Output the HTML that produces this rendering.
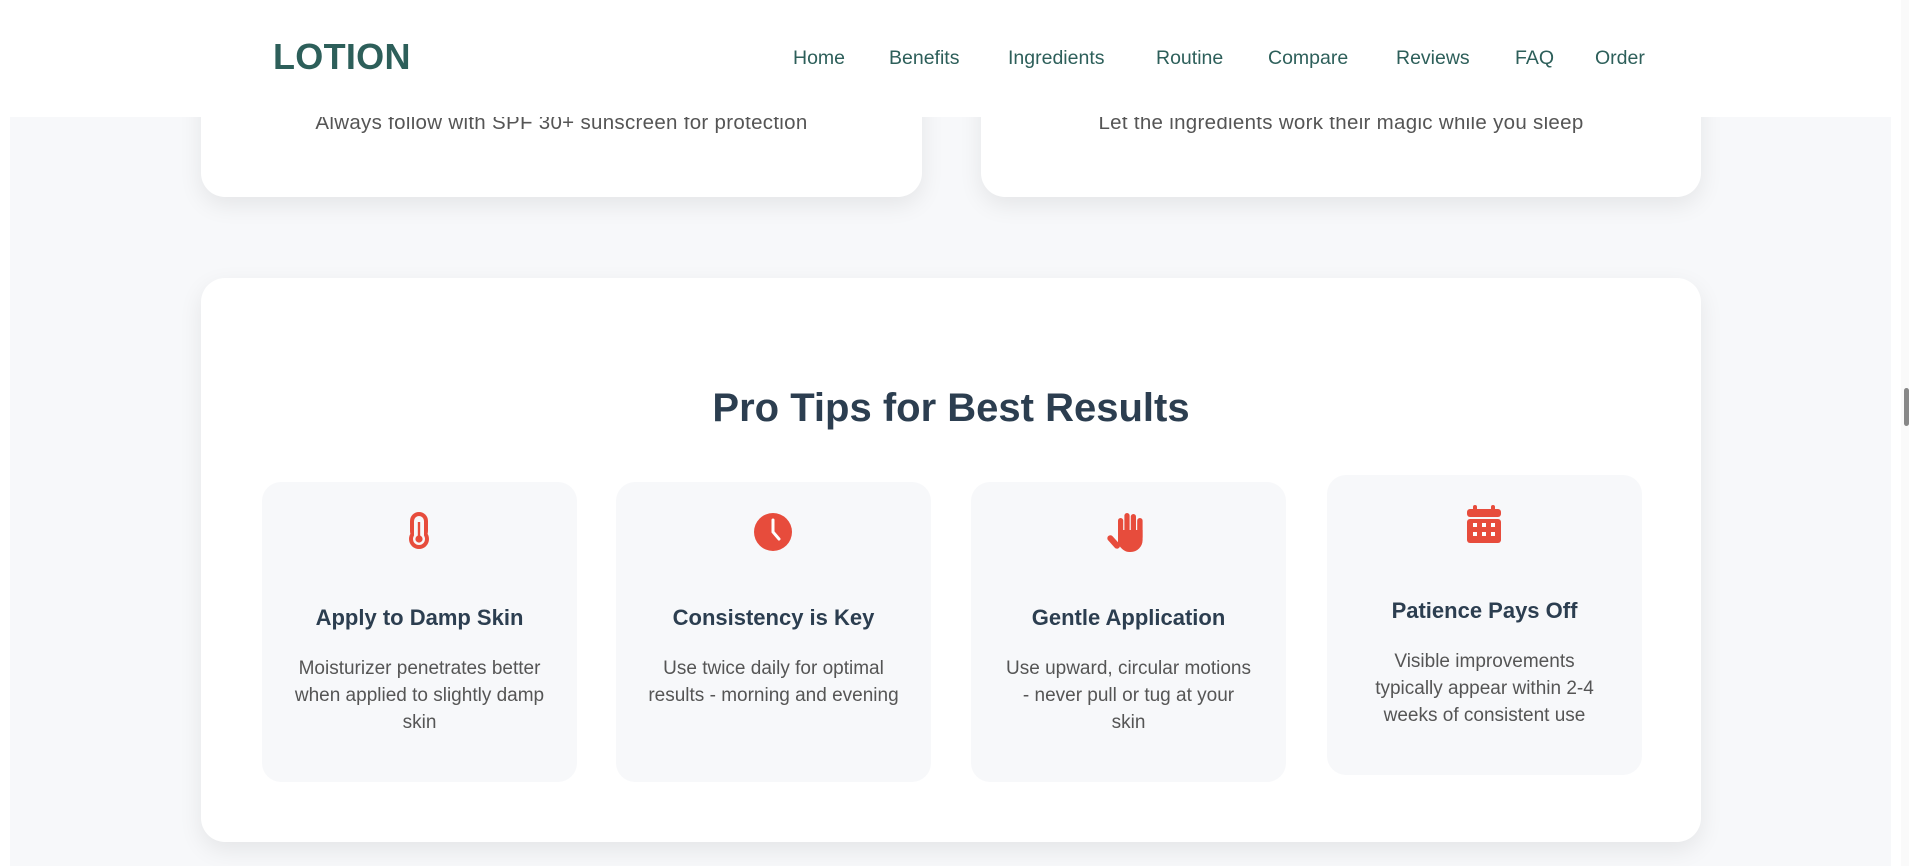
<!DOCTYPE html>
<html><head><meta charset="utf-8">
<style>
*{margin:0;padding:0;box-sizing:border-box}
html,body{width:1909px;height:866px;overflow:hidden;background:#fff;font-family:"Liberation Sans",Arial,sans-serif}
.bg{position:absolute;left:10px;top:0;width:1881px;height:866px;background:#f7f8fa}
.header{position:absolute;left:0;top:0;width:1893px;height:117px;background:#fff;z-index:5}
.logo{position:absolute;left:273px;top:36px;font-size:36px;font-weight:bold;color:#2d5f5a;letter-spacing:0.3px}
.nav{position:absolute;top:47px;font-size:19.5px;color:#2d5f5a}
.card{position:absolute;background:#fff;border-radius:24px;box-shadow:0 8px 24px rgba(0,0,0,0.08)}
.ctext{position:absolute;width:100%;text-align:center;top:111px;font-size:20.5px;letter-spacing:0.3px;color:#555}
h2{position:absolute;left:0;width:100%;text-align:center;top:108px;font-size:40px;font-weight:bold;color:#2c3e50}
.tip{position:absolute;width:315px;height:300px;background:#f7f8fa;border-radius:19px;text-align:center}
.tip svg{position:absolute}
.tip h3{position:absolute;left:0;width:100%;top:123px;font-size:22px;font-weight:bold;color:#2c3e50}
.tip p{position:absolute;left:0;width:315px;top:173px;font-size:19px;line-height:27px;color:#555}
.sb{position:absolute;left:1901px;top:0;width:8px;height:866px;background:#fafafa}
.thumb{position:absolute;left:1904px;top:388px;width:5px;height:38px;background:#888;border-radius:3px}
</style></head><body>
<div class="bg"></div>
<div class="card" style="left:201px;top:0;width:721px;height:197px;border-radius:0 0 24px 24px"><div class="ctext">Always follow with SPF 30+ sunscreen for protection</div></div>
<div class="card" style="left:981px;top:0;width:720px;height:197px;border-radius:0 0 24px 24px"><div class="ctext">Let the ingredients work their magic while you sleep</div></div>
<div class="header">
<div class="logo">LOTION</div>
<span class="nav" style="left:793px">Home</span>
<span class="nav" style="left:889px">Benefits</span>
<span class="nav" style="left:1008px">Ingredients</span>
<span class="nav" style="left:1156px">Routine</span>
<span class="nav" style="left:1268px">Compare</span>
<span class="nav" style="left:1396px">Reviews</span>
<span class="nav" style="left:1515px">FAQ</span>
<span class="nav" style="left:1595px">Order</span>
</div>
<div class="card" style="left:201px;top:278px;width:1500px;height:564px">
<h2>Pro Tips for Best Results</h2>
<div class="tip" style="left:61px;top:204px">
<svg style="left:146px;top:30px" width="22" height="37" viewBox="0 0 22 37"><rect x="2" y="0" width="18" height="28" rx="9" fill="#e74c3c"/><circle cx="11" cy="27" r="10" fill="#e74c3c"/><rect x="6" y="4" width="10" height="24" rx="5" fill="#f7f8fa"/><circle cx="11" cy="27" r="6" fill="#f7f8fa"/><rect x="9.8" y="10" width="2.4" height="16" fill="#e74c3c"/><circle cx="11" cy="27" r="3.6" fill="#e74c3c"/></svg>
<h3>Apply to Damp Skin</h3>
<p>Moisturizer penetrates better<br>when applied to slightly damp<br>skin</p></div>
<div class="tip" style="left:415px;top:204px">
<svg style="left:137px;top:30px" width="40" height="40" viewBox="0 0 40 40"><circle cx="20" cy="20" r="19" fill="#e74c3c"/><path d="M20 8v12l6 7" stroke="#fff" stroke-width="3" fill="none" stroke-linecap="round"/></svg>
<h3>Consistency is Key</h3>
<p>Use twice daily for optimal<br>results - morning and evening</p></div>
<div class="tip" style="left:770px;top:204px">
<svg style="left:136px;top:30px" width="40" height="42" viewBox="0 0 40 42" fill="#e74c3c"><rect x="11" y="6" width="5.2" height="20" rx="2.6"/><rect x="17.4" y="1" width="5.2" height="24" rx="2.6"/><rect x="23.8" y="2" width="5.2" height="24" rx="2.6"/><rect x="30.2" y="6" width="5.4" height="22" rx="2.7"/><path d="M11 18h24.6v10a12 12 0 01-12 12h-1c-5 0-8-3-11.6-8z"/><rect x="0" y="24" width="16" height="6" rx="3" transform="rotate(48 4 27)"/></svg>
<h3>Gentle Application</h3>
<p>Use upward, circular motions<br>- never pull or tug at your<br>skin</p></div>
<div class="tip" style="left:1126px;top:197px">
<svg style="left:137px;top:30px" width="40" height="40" viewBox="0 0 40 40"><rect x="9" y="0" width="4" height="8" rx="2" fill="#e74c3c"/><rect x="27" y="0" width="4" height="8" rx="2" fill="#e74c3c"/><rect x="3" y="4" width="34" height="8" rx="3" fill="#e74c3c"/><rect x="3" y="14" width="34" height="24" rx="3" fill="#e74c3c"/><g fill="#fff"><rect x="9" y="18" width="4" height="4"/><rect x="18" y="18" width="4" height="4"/><rect x="27" y="18" width="4" height="4"/><rect x="9" y="27" width="4" height="4"/><rect x="18" y="27" width="4" height="4"/><rect x="27" y="27" width="4" height="4"/></g></svg>
<h3>Patience Pays Off</h3>
<p>Visible improvements<br>typically appear within 2-4<br>weeks of consistent use</p></div>
</div>
<div class="sb"></div><div class="thumb"></div>
</body></html>
